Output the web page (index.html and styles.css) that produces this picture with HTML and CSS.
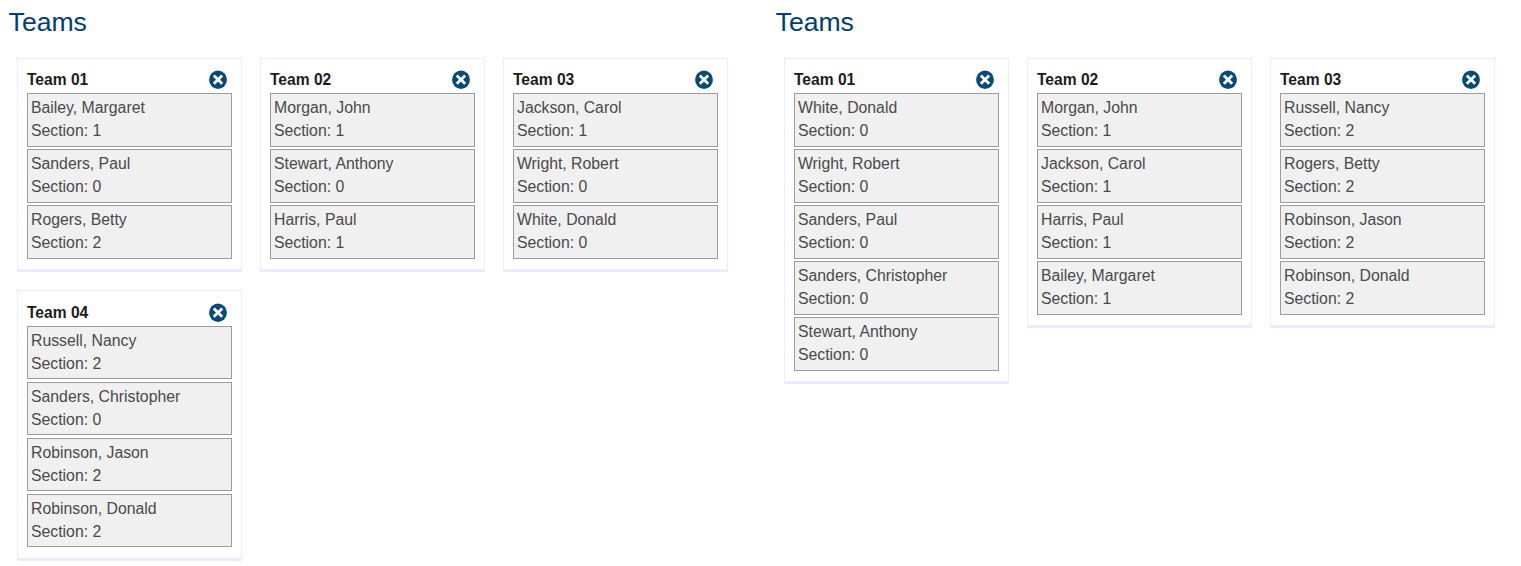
FILE: index.html
```html
<!DOCTYPE html>
<html lang="en">
<head>
<meta charset="utf-8">
<title>Teams</title>
<link rel="stylesheet" href="styles.css">
</head>
<body>
<main class="page" id="page"></main>
<script src="app.js"></script>
</body>
</html>
```
FILE: styles.css
```css
* { box-sizing: border-box; }
body {
  margin: 0;
  background: #fff;
  color: #4a4a4a;
  font: 15.8px/22.8px "Liberation Sans", Arial, sans-serif;
}
.page {
  display: grid;
  grid-template-columns: 767px 754px;
  height: 566px;
  overflow: hidden;
}
.panel { padding: 5px 0 0 8.6px; }
.panel-title {
  margin: 0 0 17.8px;
  color: #003e70;
  font-size: 26.6px;
  font-weight: 400;
  line-height: 35px;
}
.teams {
  display: grid;
  grid-template-columns: repeat(3, 225px);
  gap: 18px;
  align-items: start;
  padding-left: 8.4px;
}
.team {
  padding: 11.5px 9px 10.7px;
  border: 1px solid #ebebff;
  border-bottom-width: 3px;
}
.team-header {
  display: flex;
  justify-content: space-between;
  align-items: flex-start;
  height: 23px;
  padding-right: 5px;
}
.team-name {
  margin: 0;
  color: #1c1c1c;
  font-size: 15.6px;
  font-weight: 700;
  line-height: 20px;
}
.remove {
  display: flex;
  padding: 0;
  border: 0;
  background: none;
}
.remove svg { width: 18px; height: 19px; display: block; }
.members {
  display: grid;
  gap: 2.6px;
  margin: 0;
  padding: 0;
  list-style: none;
}
.member {
  height: 53.4px;
  padding: 3.1px 3px 0;
  border: 1px solid #9c9c9c;
  background: #f0f0f0;
}
.member div { white-space: nowrap; }
```
FILE: app.js
```js
const panels = [
  [
    ["Team 01", [["Bailey, Margaret", 1], ["Sanders, Paul", 0], ["Rogers, Betty", 2]]],
    ["Team 02", [["Morgan, John", 1], ["Stewart, Anthony", 0], ["Harris, Paul", 1]]],
    ["Team 03", [["Jackson, Carol", 1], ["Wright, Robert", 0], ["White, Donald", 0]]],
    ["Team 04", [["Russell, Nancy", 2], ["Sanders, Christopher", 0], ["Robinson, Jason", 2], ["Robinson, Donald", 2]]]
  ],
  [
    ["Team 01", [["White, Donald", 0], ["Wright, Robert", 0], ["Sanders, Paul", 0], ["Sanders, Christopher", 0], ["Stewart, Anthony", 0]]],
    ["Team 02", [["Morgan, John", 1], ["Jackson, Carol", 1], ["Harris, Paul", 1], ["Bailey, Margaret", 1]]],
    ["Team 03", [["Russell, Nancy", 2], ["Rogers, Betty", 2], ["Robinson, Jason", 2], ["Robinson, Donald", 2]]]
  ]
];

const closeIcon = `<svg viewBox="0 0 18 19" aria-hidden="true">
  <ellipse cx="9" cy="9.7" rx="8.9" ry="9.2" fill="#064a78"/>
  <path d="M4.8 5.4l8.4 8.4M13.2 5.4l-8.4 8.4" stroke="#fff" stroke-width="2.8" fill="none"/>
</svg>`;

const member = ([name, section]) =>
  `<li class="member"><div>${name}</div><div>Section: ${section}</div></li>`;

const team = ([name, members]) => `<article class="team">
  <header class="team-header">
    <h2 class="team-name">${name}</h2>
    <button class="remove" aria-label="Remove ${name}">${closeIcon}</button>
  </header>
  <ul class="members">${members.map(member).join("")}</ul>
</article>`;

document.getElementById("page").innerHTML = panels.map(teams =>
  `<section class="panel"><h1 class="panel-title">Teams</h1><div class="teams">${teams.map(team).join("")}</div></section>`
).join("");
```
